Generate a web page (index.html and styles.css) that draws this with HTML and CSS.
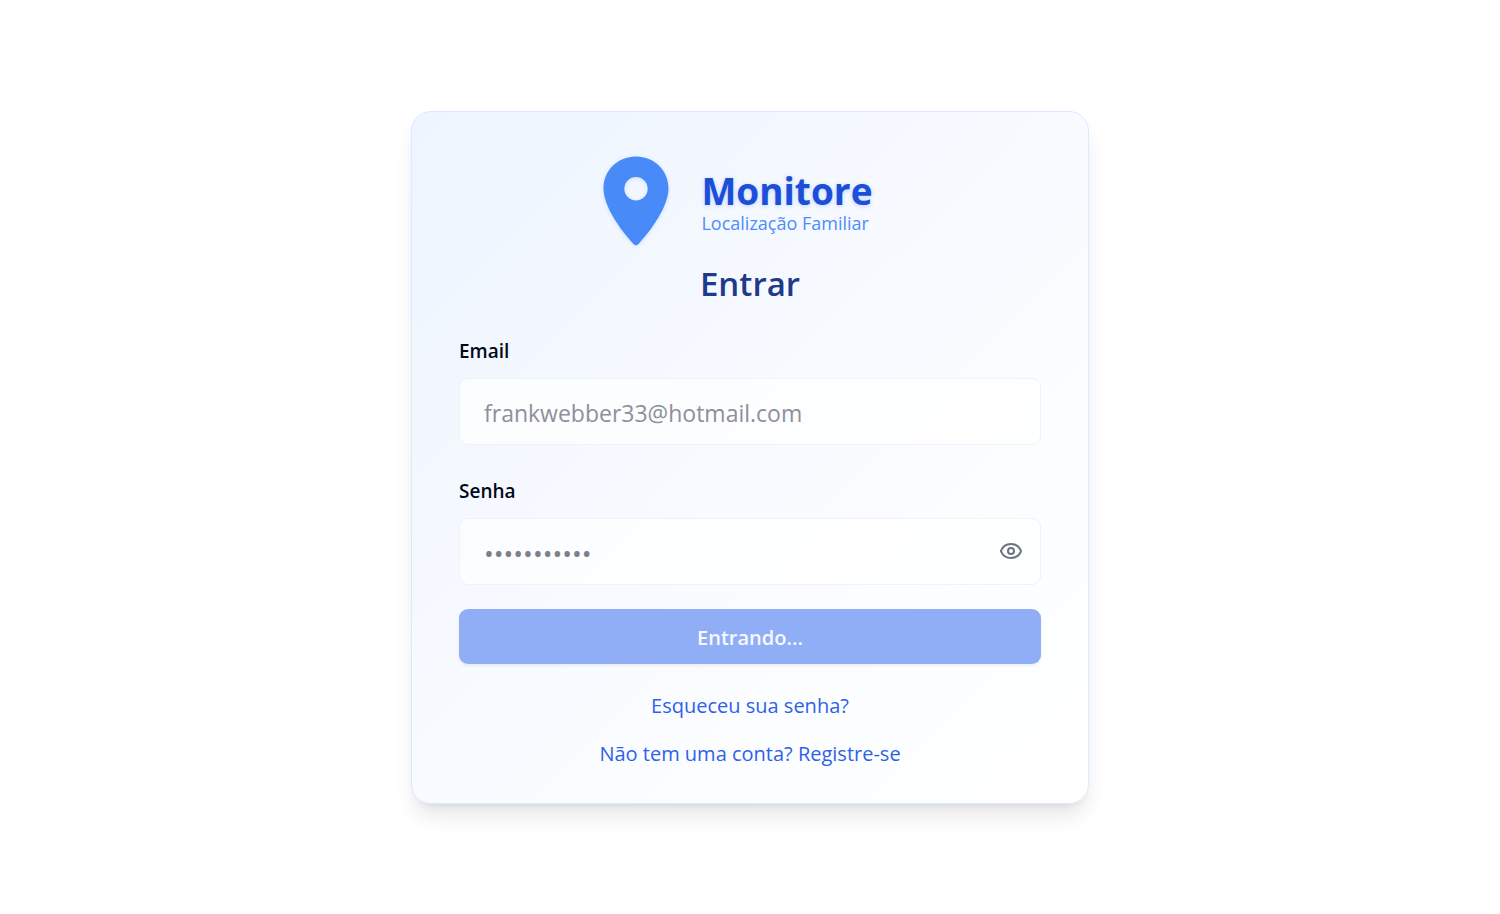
FILE: index.html
```html
<!DOCTYPE html>
<html lang="pt-BR">
<head>
<meta charset="utf-8">
<meta name="viewport" content="width=device-width, initial-scale=1">
<title>Monitore - Entrar</title>
<link rel="stylesheet" href="styles.css">
</head>
<body>
<main class="card">
  <header class="brand">
    <svg class="brand-pin" viewBox="0 0 66 90" aria-hidden="true">
      <path fill="#488bf8" fill-rule="evenodd" d="M33 .5C14.500 .5.500 14.500.500 32.500C.500 48 14 70 30.500 88Q33 90.500 35.500 88C52 70 65.500 48 65.500 32.500C65.500 14.500 51.500.5 33 .5ZM33 21a11.700 11.700 0 1 1 0 23.400a11.700 11.700 0 1 1 0-23.400Z"/>
    </svg>
    <div class="brand-text">
      <span class="brand-name">Monitore</span>
      <span class="brand-tagline">Localização Familiar</span>
    </div>
  </header>
  <h1 class="title">Entrar</h1>
  <form class="form">
    <div class="field">
      <label class="label" for="email">Email</label>
      <input class="input" id="email" type="email" value="frankwebber33@hotmail.com" disabled>
    </div>
    <div class="field">
      <label class="label" for="password">Senha</label>
      <div class="password">
        <input class="input password-input" id="password" type="password" value="12345678901" disabled>
        <button class="toggle" type="button" aria-label="Mostrar senha">
          <svg class="eye" viewBox="0 0 24 24" fill="none" stroke="currentColor" stroke-width="2" stroke-linecap="round" stroke-linejoin="round" aria-hidden="true">
            <path d="M2.062 12.348a1 1 0 0 1 0-.696 10.750 10.750 0 0 1 19.876 0 1 1 0 0 1 0 .696 10.750 10.750 0 0 1-19.876 0"/>
            <circle cx="12" cy="12" r="3"/>
          </svg>
        </button>
      </div>
    </div>
    <button class="submit" type="submit" disabled>Entrando...</button>
  </form>
  <nav class="links">
    <a class="link" href="#recuperar">Esqueceu sua senha?</a>
    <a class="link" href="#registro">Não tem uma conta? Registre-se</a>
  </nav>
</main>
</body>
</html>
```
FILE: styles.css
```css
* {
  box-sizing: border-box;
}

body {
  margin: 0;
  min-height: 100vh;
  display: flex;
  align-items: center;
  justify-content: center;
  background: #fff;
  font-family: "Segoe UI", "Open Sans", "Noto Sans", sans-serif;
}

.card {
  width: 100%;
  max-width: 678px;
  padding: 40px 47px 35px;
  border: 1px solid #dbeafe;
  border-radius: 20px;
  background: linear-gradient(135deg, #edf5ff, #f6f9ff 40%, #fbfdff 70%, #fff);
  box-shadow: 0 15px 22px -4px rgba(0, 0, 0, 0.1), 0 6px 9px -6px rgba(0, 0, 0, 0.1);
}

.brand {
  display: flex;
  align-items: center;
  justify-content: center;
  gap: 32px;
  padding: 4px 24px 0 0;
}

.brand-pin {
  width: 66px;
  height: 90px;
  filter: drop-shadow(0 1px 2px rgba(59, 130, 246, 0.2));
}

.brand-text {
  display: flex;
  flex-direction: column;
  padding-top: 4px;
}

.brand-name {
  font-size: 37px;
  font-weight: 700;
  line-height: 40px;
  color: #1d4ed8;
  text-shadow: 0 1px 4px rgba(59, 130, 246, 0.3);
}

.brand-tagline {
  font-size: 18px;
  font-weight: 400;
  line-height: 24px;
  color: #4d8df7;
}

.title {
  margin: 16px 0 31px;
  font-size: 33px;
  font-weight: 600;
  line-height: 44px;
  text-align: center;
  color: #1e3a8a;
}

.form {
  display: flex;
  flex-direction: column;
  gap: 24px;
}

.field {
  display: flex;
  flex-direction: column;
  gap: 13px;
}

.field + .field {
  margin-top: 8px;
}

.label {
  font-size: 19px;
  font-weight: 600;
  line-height: 28px;
  color: #020817;
}

.input {
  width: 100%;
  height: 67px;
  padding: 4px 24px 0;
  border: 1px solid #eef2fa;
  border-radius: 9px;
  background: rgba(255, 255, 255, 0.7);
  font: 400 23px/32px "Segoe UI", "Open Sans", "Noto Sans", sans-serif;
  color: #8c909a;
}

.password {
  display: flex;
  position: relative;
}

.password-input {
  font-size: 26px;
  color: #7d818b;
}

.toggle {
  position: absolute;
  inset: 0 18px 0 auto;
  display: flex;
  align-items: center;
  padding: 0;
  border: 0;
  background: none;
  color: #6b7280;
}

.eye {
  width: 24px;
  height: 24px;
}

.submit {
  height: 55px;
  padding: 4px 24px 0;
  border: 0;
  border-radius: 9px;
  background: #90aef6;
  box-shadow: 0 2px 3px rgba(0, 0, 0, 0.06);
  font: 600 20px/28px "Segoe UI", "Open Sans", "Noto Sans", sans-serif;
  color: #f5f9ff;
}

.links {
  display: flex;
  flex-direction: column;
  align-items: center;
  gap: 20px;
  padding-top: 28px;
}

.link {
  font-size: 20px;
  line-height: 28px;
  color: #2f61e8;
  text-decoration: none;
}
```
